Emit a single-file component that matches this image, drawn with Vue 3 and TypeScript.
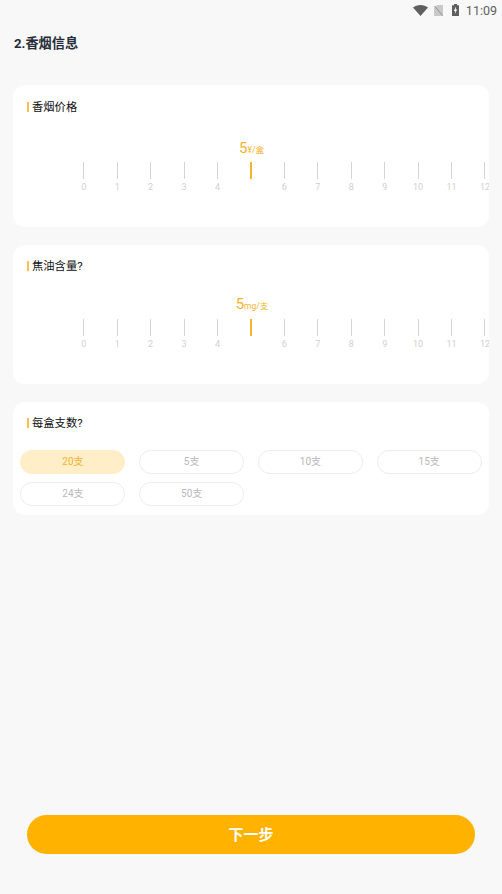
<script setup lang="ts">
const ticks: number[] = Array.from({ length: 13 }, (_, i) => i)
const rulers = [
  { title: '香烟价格', unit: '¥/盒', cls: 'first' },
  { title: '焦油含量?', unit: 'mg/支', cls: 'second' },
]
const options = ['20支', '5支', '10支', '15支', '24支', '50支']
</script>

<template>
  <div class="page">
    <div class="status">
      <svg class="wifi" width="15" height="11" viewBox="0 0 15 11"><path d="M0 2.6C2 1 4.6 0 7.5 0s5.500 1 7.500 2.600L7.500 11z" fill="#5f5f5f" /></svg>
      <svg class="sim" width="9" height="11" viewBox="0 0 9 11">
        <path d="M3 0h6v11H0V3z" fill="#c9c9c9" />
        <path d="M0.500 1L8.500 10.500" stroke="#8f8f8f" stroke-width="1" />
      </svg>
      <svg class="bat" width="7" height="12" viewBox="0 0 7 12">
        <path d="M2 0h3v1.200h2V12H0V1.200h2z" fill="#5f5f5f" />
        <path d="M4 2.500L1.800 7h1.400L2.800 10 5.200 5.600H3.800z" fill="#fff" />
      </svg>
      <span class="time">11:09</span>
    </div>
    <h1 class="heading">2.香烟信息</h1>

    <section v-for="r in rulers" :key="r.title" class="card" :class="r.cls">
      <div class="label">{{ r.title }}</div>
      <div class="value"><span class="num">5</span><span class="unit">{{ r.unit }}</span></div>
      <div class="ruler">
        <div v-for="t in ticks" :key="t" class="tick" :class="{ active: t === 5 }">
          <i class="mark"></i>
          <span class="tnum">{{ t === 5 ? '' : t }}</span>
        </div>
      </div>
    </section>

    <section class="card third">
      <div class="label">每盒支数?</div>
      <div class="options">
        <div v-for="(o, i) in options" :key="o" class="opt" :class="{ on: i === 0 }">{{ o }}</div>
      </div>
    </section>

    <div class="spacer"></div>
    <button class="next">下一步</button>
  </div>
</template>

<style scoped>
.page {
  width: 502px;
  height: 894px;
  box-sizing: border-box;
  background: #f8f8f8;
  display: flex;
  flex-direction: column;
  font-family: Roboto, "Noto Sans CJK SC", sans-serif;
  overflow: hidden;
}
.status {
  height: 20px;
  display: flex;
  align-items: center;
  justify-content: flex-end;
  padding-right: 5px;
  box-sizing: border-box;
}
.wifi { margin-right: 6px; }
.sim { margin-right: 9px; }
.bat { margin-right: 7px; }
.time {
  font-size: 12.500px;
  color: #5f5f5f;
  font-weight: 400;
}
.heading {
  margin: 14px 0 0 14px;
  height: 20px;
  line-height: 20px;
  font-size: 13.200px;
  font-weight: 700;
  color: #262b38;
}
.card {
  margin: 0 13px 18px;
  background: #fff;
  border-radius: 12px;
  overflow: hidden;
  box-sizing: border-box;
}
.first { margin-top: 31px; height: 142px; padding-top: 17px; }
.second { height: 139px; padding-top: 16px; }
.third { height: 113px; padding-top: 16px; }
.label {
  margin-left: 14px;
  padding-left: 3px;
  border-left: 2px solid #f9c04a;
  font-size: 11.300px;
  color: #111;
  height: 10px;
  line-height: 12px;
}
.value {
  display: flex;
  align-items: baseline;
  justify-content: center;
  height: 18px;
  line-height: 18px;
  color: #f5b32e;
}
.first .value { margin-top: 27px; margin-left: 1px; }
.second .value { margin-top: 24px; margin-left: 2px; }
.num { font-size: 15px; }
.unit { font-size: 8.500px; }
.ruler {
  display: flex;
  margin: 6px 0 0 54px;
  width: 422px;
  overflow: hidden;
}
.first .ruler { margin-top: 5px; }
.tick {
  flex: 0 0 33.450px;
  display: flex;
  flex-direction: column;
  align-items: center;
}
.mark {
  display: block;
  width: 1px;
  height: 17px;
  background: #d4d4d4;
}
.active .mark {
  width: 2px;
  background: #f5b32e;
}
.tnum {
  margin-top: 3px;
  height: 11px;
  line-height: 11px;
  font-size: 9px;
  color: #d0d0d0;
}
.options {
  display: grid;
  grid-template-columns: repeat(4, 105.200px);
  column-gap: 13.600px;
  row-gap: 8.700px;
  margin: 22px 0 0 7.300px;
}
.opt {
  height: 23.600px;
  line-height: 21.600px;
  box-sizing: border-box;
  border: 1px solid #ececec;
  border-radius: 12px;
  text-align: center;
  font-size: 10px;
  color: #b8b8b8;
}
.opt.on {
  background: #ffeec8;
  border-color: #ffeec8;
  color: #f5b32e;
}
.spacer { flex: 1; }
.next {
  display: block;
  margin: 0 27px 40px;
  width: 448px;
  height: 39px;
  padding: 0 0 2px;
  border: none;
  border-radius: 20px;
  background: #ffb300;
  color: #fff;
  font-family: inherit;
  font-size: 15px;
  font-weight: 700;
}
</style>
